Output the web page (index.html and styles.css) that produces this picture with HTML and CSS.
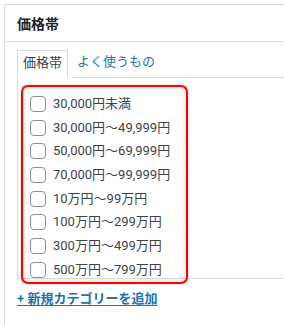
FILE: index.html
```html
<!DOCTYPE html>
<html lang="ja">
<head>
<meta charset="utf-8">
<title>価格帯</title>
<link rel="stylesheet" href="styles.css">
</head>
<body>
<div class="postbox">
  <div class="postbox-header"><h2 class="title">価格帯</h2></div>
  <div class="inside">
    <ul class="tabs">
      <li class="tab active">価格帯</li>
      <li class="tab">よく使うもの</li>
      <li class="tab-fill"></li>
    </ul>
    <div class="tabs-panel">
      <ul class="checklist">
        <li class="item"><span class="box"></span><span>30,000円未満</span></li>
        <li class="item"><span class="box"></span><span>30,000円～49,999円</span></li>
        <li class="item"><span class="box"></span><span>50,000円～69,999円</span></li>
        <li class="item"><span class="box"></span><span>70,000円～99,999円</span></li>
        <li class="item"><span class="box"></span><span>10万円～99万円</span></li>
        <li class="item"><span class="box"></span><span>100万円～299万円</span></li>
        <li class="item"><span class="box"></span><span>300万円～499万円</span></li>
        <li class="item"><span class="box"></span><span>500万円～799万円</span></li>
      </ul>
    </div>
    <a class="add-new" href="#">+ 新規カテゴリーを追加</a>
  </div>
</div>
<div class="highlight"></div>
</body>
</html>
```
FILE: styles.css
```css
html, body {
  margin: 0;
  padding: 0;
  background: #fff;
  overflow: hidden;
  font-family: Roboto, "Noto Sans CJK JP", sans-serif;
  font-size: 13px;
  color: #3c434a;
}
.postbox {
  margin: 4px 0 0 4px;
  width: 330px;
  height: 321px;
  border: 1px solid #dcdcde;
  border-right: none;
  border-bottom: none;
}
.postbox-header {
  height: 36px;
  border-bottom: 1px solid #dcdcde;
  padding: 0 12px;
  display: flex;
  align-items: center;
}
.title {
  margin: 2px 0 0;
  font-size: 14px;
  font-weight: 700;
  color: #1d2327;
  line-height: 1;
}
.inside {
  padding: 8px 12px 0;
}
.tabs {
  list-style: none;
  margin: 0;
  padding: 0;
  display: flex;
  line-height: 18px;
}
.tab {
  padding: 3px 5px 5px;
  border-bottom: 1px solid #dcdcde;
  color: #2271b1;
  margin-left: 4px;
}
.tab.active {
  margin-left: 0;
  color: #3c434a;
  border: 1px solid #dcdcde;
  border-bottom: 1px solid transparent;
}
.tab-fill {
  flex: 1;
  border-bottom: 1px solid #dcdcde;
}
.tabs-panel {
  height: 200px;
  overflow: hidden;
  border: 1px solid #dcdcde;
  border-top: none;
}
.checklist {
  list-style: none;
  margin: 0;
  padding: 14px 0 0 12px;
}
.item {
  height: 23.7px;
  display: flex;
  align-items: center;
  gap: 7px;
  line-height: 18px;
}
.box {
  width: 14px;
  height: 14px;
  border: 1px solid #8c8f94;
  border-radius: 4px;
  background: #fff;
  flex: none;
}
.add-new {
  display: inline-block;
  margin-top: 11px;
  line-height: 18px;
  color: #2271b1;
  font-weight: 600;
  text-decoration: underline;
  text-underline-offset: 2px;
}
.highlight {
  position: absolute;
  left: 21px;
  top: 85px;
  width: 163px;
  height: 195px;
  border: 2px solid #f00;
  border-radius: 7px;
  box-shadow: inset 0 0 5px rgba(0, 0, 0, 0.22), 0 0 3px rgba(0, 0, 0, 0.2);
}
```
